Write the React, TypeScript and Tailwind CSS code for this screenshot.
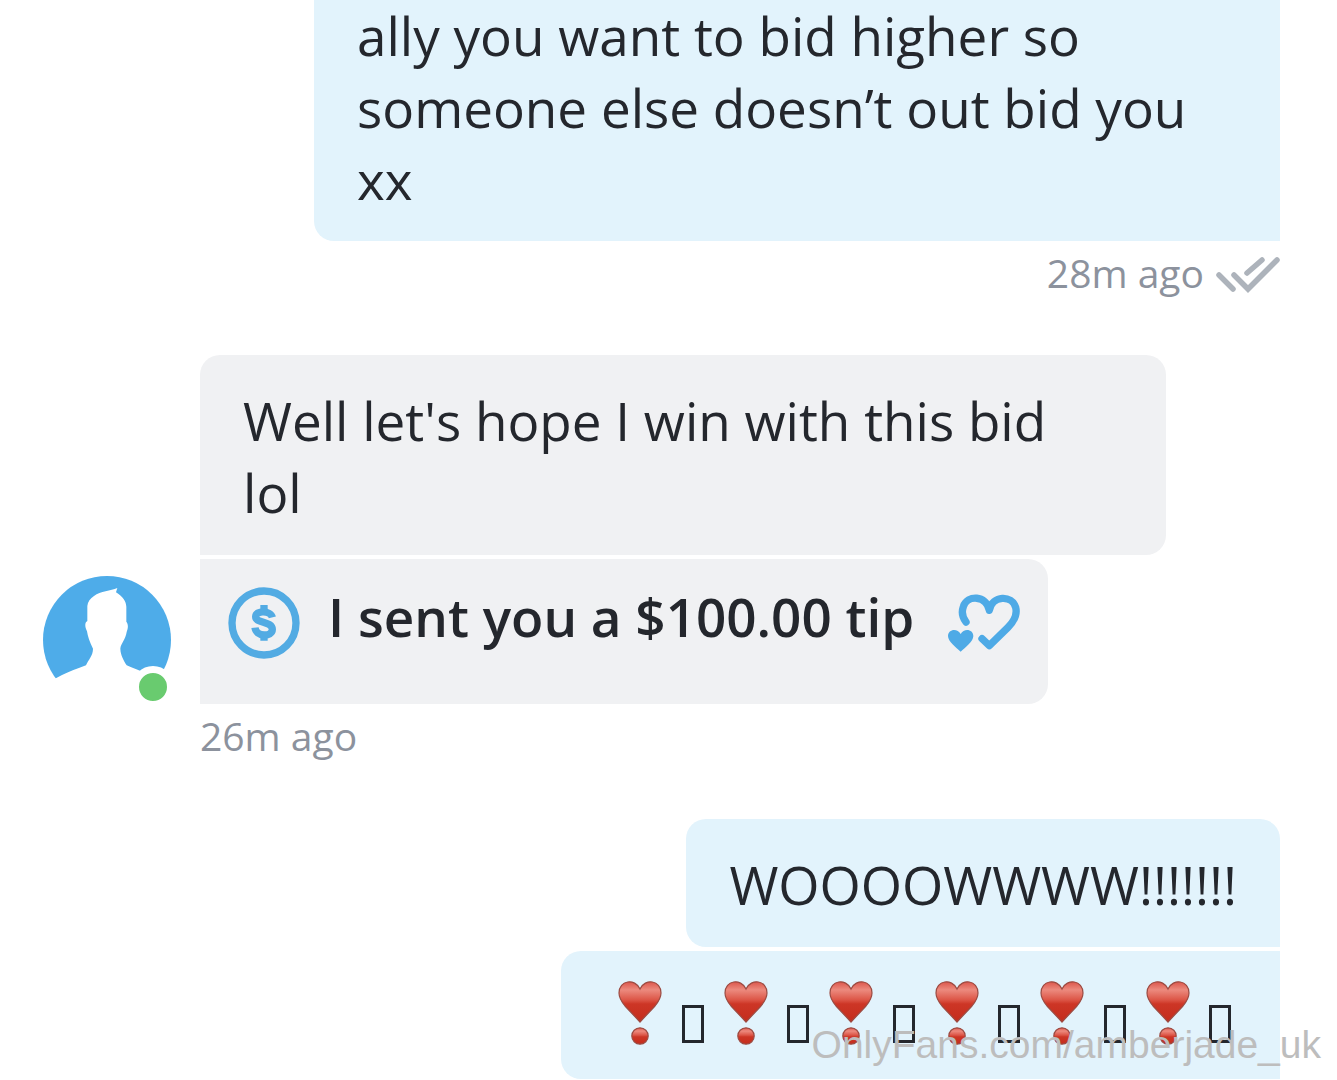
import type { ReactNode } from 'react';

type Side = 'in' | 'out';

interface BubbleProps {
  side: Side;
  className?: string;
  children: ReactNode;
}

function Bubble({ side, className = '', children }: BubbleProps) {
  const tone = side === 'out' ? 'bg-[#e2f3fc]' : 'bg-[#f0f1f3]';
  return (
    <div className={`${tone} max-w-[966px] px-[43px] text-[53px] leading-[72px] text-[#24272d] ${className}`}>
      {children}
    </div>
  );
}

function ReadIcon() {
  return (
    <svg viewBox="0 0 64 40" className="h-10 w-16 shrink-0" fill="none" stroke="#adb3bb" strokeWidth="5.5" strokeLinecap="round" aria-label="Read">
      <path d="M3 22 17 36M31 20 46 7" />
      <path d="M18 22 32 36 61 7" />
    </svg>
  );
}

function DollarIcon() {
  return (
    <svg viewBox="624 80 216 216" className="size-[72px] shrink-0" fill="none" stroke="#52abe3" aria-hidden="true">
      <circle cx="732" cy="188" r="96" strokeWidth="22" />
      <path d="M757 171C752 150 707 149 707 169C707 190 757 181 757 207C757 231 708 230 705 202" strokeWidth="22" />
      <path d="M732 134V152M732 224V241" strokeWidth="22" />
    </svg>
  );
}

function HeartsIcon() {
  return (
    <svg viewBox="84 100 216 174" className="h-[58px] w-[72px] shrink-0" aria-hidden="true">
      <path
        d="M138 184C125 167 126 149 130 138C142 102 199 103 208 149C217 103 276 103 287 140C292 160 286 178 264 200L208 255L186 234"
        fill="none"
        stroke="#4eaae6"
        strokeWidth="22"
        strokeLinecap="round"
        strokeLinejoin="round"
      />
      <path d="M122 273C108 260 84 243 84 226C84 205 112 201 122 220C132 201 160 205 160 226C160 243 136 260 122 273Z" fill="#4eaae6" />
    </svg>
  );
}

function Avatar() {
  return (
    <div className="relative size-32 shrink-0">
      <svg viewBox="69 48 384 384" className="size-full" aria-label="Profile picture">
        <circle cx="261" cy="240" r="192" fill="#4eace9" />
        <path
          d="M60 386C95 358 140 337 198 316C204 300 219 288 219 266C209 246 203 228 201 214C194 200 194 187 202 183V138C203 125 211 115 222 108C242 93 272 93 292 84L288 97C310 112 318 124 319 140V185C326 193 324 206 320 216C317 238 302 251 301 266C302 288 312 302 320 316C358 334 420 350 466 384V442H60Z"
          fill="#fff"
        />
      </svg>
      <span className="absolute -right-[3px] -bottom-1 size-[42px] rounded-full border-[7px] border-white bg-[#69cb6f]" />
    </div>
  );
}

function HeartExclamation() {
  return (
    <svg viewBox="0 0 72 72" className="size-[72px] shrink-0" aria-hidden="true">
      <defs>
        <linearGradient id="heart-fill" x1="0" y1="0" x2="0" y2="1">
          <stop offset="0" stopColor="#dc574c" />
          <stop offset="0.2" stopColor="#ec8a7e" />
          <stop offset="0.45" stopColor="#dc5546" />
          <stop offset="0.55" stopColor="#cd3626" />
          <stop offset="1" stopColor="#c42c1c" />
        </linearGradient>
      </defs>
      <g fill="url(#heart-fill)" stroke="#9c4b42" strokeWidth="1.2">
        <path d="M36 43L21 27C17 22 15 18 15 14C15 1 31 -1 36 10C41 -1 57 1 57 14C57 18 55 22 51 27Z" />
        <circle cx="36" cy="57" r="8.2" />
      </g>
    </svg>
  );
}

function MissingGlyph() {
  return (
    <span className="flex w-[33px] justify-center">
      <span className="mt-[18px] h-[38px] w-[22px] border-3 border-[#24272d]" />
    </span>
  );
}

const hearts = [0, 1, 2, 3, 4, 5];

export default function App() {
  return (
    <main className="relative h-screen overflow-hidden bg-white pr-[57px] pl-[43px] font-['Open_Sans',sans-serif]">
      <section className="flex flex-col items-end">
        <Bubble side="out" className="w-full rounded-bl-[20px] pb-[25px] whitespace-pre-line">
          {'ally you want to bid higher so\nsomeone else doesn’t out bid you\nxx'}
        </Bubble>
        <div className="flex items-center gap-3 pt-[3px] text-[39px] leading-[58px] text-[#8c929d]">
          <time>28m ago</time>
          <ReadIcon />
        </div>
      </section>

      <section className="mt-[53px]">
        <div className="flex items-end gap-[29px]">
          <Avatar />
          <div className="flex flex-1 flex-col items-start gap-1">
            <Bubble side="in" className="w-full rounded-[20px] rounded-bl-none pt-[30px] pb-[26px] whitespace-pre-line">
              {"Well let's hope I win with this bid\nlol"}
            </Bubble>
            <div className="flex items-start gap-7 rounded-r-[20px] bg-[#f0f1f3] px-7 pt-7 pb-[45px] text-[53px] leading-[72px] font-semibold text-[#24272d]">
              <DollarIcon />
              <span className="-mt-[6px]">I sent you a $100.00 tip</span>
              <span className="pt-[7px] pl-[6px]">
                <HeartsIcon />
              </span>
            </div>
          </div>
        </div>
        <div className="pt-[3px] pl-[157px] text-[39px] leading-[58px] text-[#8c929d]">
          <time>26m ago</time>
        </div>
      </section>

      <section className="mt-[54px] flex flex-col items-end gap-1">
        <Bubble side="out" className="rounded-[20px] rounded-br-none pt-[30px] pb-[26px]">
          WOOOOWWWW!!!!!!!
        </Bubble>
        <Bubble side="out" className="flex w-[719px] justify-between rounded-l-[20px] py-7">
          {hearts.map((n) => (
            <span key={n} className="flex items-center">
              <HeartExclamation />
              <MissingGlyph />
            </span>
          ))}
        </Bubble>
      </section>

      <p className="absolute right-4 bottom-3 font-['Liberation_Sans',sans-serif] text-[39px] leading-[46px] text-[#bdbdbd]">
        OnlyFans.com/amberjade_uk
      </p>
    </main>
  );
}
